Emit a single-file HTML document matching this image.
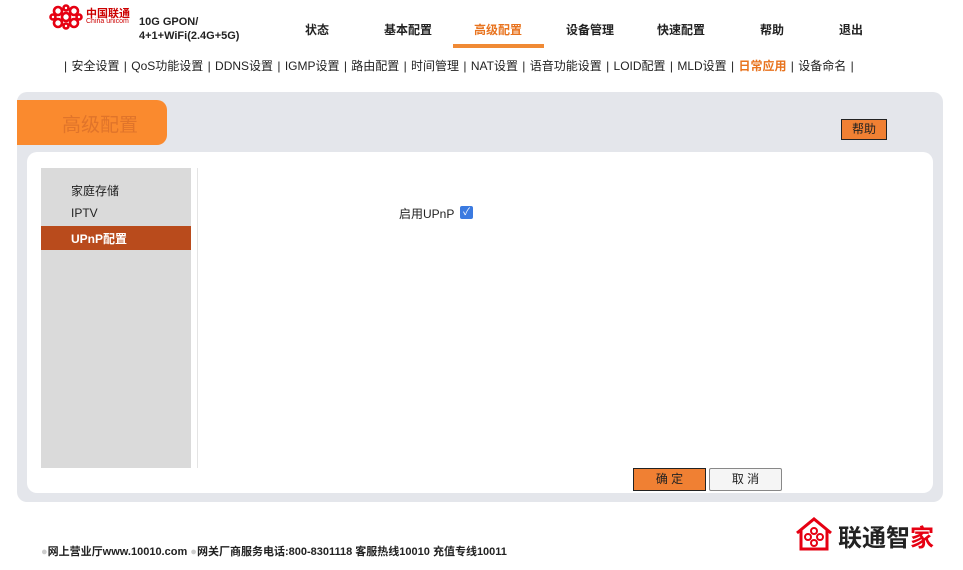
<!DOCTYPE html>
<html><head><meta charset="utf-8"><style>
body{margin:0;width:963px;height:570px;background:#fff;font-family:"Liberation Sans","Noto Sans CJK SC",sans-serif;position:relative;overflow:hidden;color:#222}
.a{position:absolute;white-space:nowrap}
.nav{font-size:12px;font-weight:bold;top:21px}
.sub{top:57px;left:64px;font-size:12px;color:#222;word-spacing:1px}
</style></head><body>
<svg class="a" style="left:49px;top:4px" width="34" height="26" viewBox="0 0 34 26"><g fill="none" stroke="#e60012" stroke-width="2.6"><circle cx="9" cy="7" r="4"/><circle cx="25" cy="7" r="4"/><circle cx="9" cy="19" r="4"/><circle cx="25" cy="19" r="4"/><circle cx="17" cy="13" r="4"/><circle cx="17" cy="4" r="2.5"/><circle cx="17" cy="22" r="2.5"/><circle cx="4" cy="13" r="2.5"/><circle cx="30" cy="13" r="2.5"/></g></svg>
<div class="a" style="left:86px;top:5px;font-size:11px;font-weight:bold;color:#c00">中国联通</div>
<div class="a" style="left:86px;top:18px;font-size:7px;color:#c00">China unicom</div>
<div class="a" style="left:139px;top:15px;font-size:11px;font-weight:bold;line-height:14px">10G GPON/<br>4+1+WiFi(2.4G+5G)</div>
<div class="a nav" style="left:305px">状态</div>
<div class="a nav" style="left:384px">基本配置</div>
<div class="a nav" style="left:474px;color:#e8731e">高级配置</div>
<div class="a" style="left:453px;top:44px;width:91px;height:4px;background:#f08a35"></div>
<div class="a nav" style="left:566px">设备管理</div>
<div class="a nav" style="left:657px">快速配置</div>
<div class="a nav" style="left:760px">帮助</div>
<div class="a nav" style="left:839px">退出</div>
<div class="a sub">| 安全设置 | QoS功能设置 | DDNS设置 | IGMP设置 | 路由配置 | 时间管理 | NAT设置 | 语音功能设置 | LOID配置 | MLD设置 | <span style="color:#e8731e;font-weight:bold">日常应用</span> | 设备命名 |</div>
<div class="a" style="left:17px;top:92px;width:926px;height:410px;background:#e4e6eb;border-radius:10px"></div>
<div class="a" style="left:17px;top:100px;width:150px;height:45px;background:#fa8a2e;border-radius:0 10px 10px 0"></div>
<div class="a" style="left:62px;top:110px;font-size:19px;font-weight:normal;color:#e0742a">高级配置</div>
<div class="a" style="left:841px;top:119px;width:44px;height:19px;background:#f08033;border:1px solid #222;font-size:12px;text-align:center;line-height:19px">帮助</div>
<div class="a" style="left:27px;top:152px;width:906px;height:341px;background:#fff;border-radius:10px"></div>
<div class="a" style="left:41px;top:168px;width:150px;height:300px;background:#dadada"></div>
<div class="a" style="left:197px;top:168px;width:1px;height:300px;background:#e4e4e4"></div>
<div class="a" style="left:71px;top:182px;font-size:12px">家庭存储</div>
<div class="a" style="left:71px;top:206px;font-size:12px">IPTV</div>
<div class="a" style="left:41px;top:226px;width:150px;height:24px;background:#b94b1c"></div>
<div class="a" style="left:71px;top:230px;font-size:12px;color:#fff;font-weight:bold">UPnP配置</div>
<div class="a" style="left:399px;top:205px;font-size:12px">启用UPnP</div>
<div class="a" style="left:460px;top:206px;width:13px;height:13px;background:#3b7ae0;border-radius:2px;color:#fff;font-size:10px;line-height:13px;text-align:center">✓</div>
<div class="a" style="left:633px;top:468px;width:71px;height:21px;background:#f08033;border:1px solid #222;font-size:12px;text-align:center;line-height:21px">确 定</div>
<div class="a" style="left:709px;top:468px;width:71px;height:21px;background:#f5f5f5;border:1px solid #888;border-radius:2px;font-size:12px;text-align:center;line-height:21px">取 消</div>
<div class="a" style="left:41px;top:543px;font-size:11px;font-weight:bold"><span style="color:#ccc">●</span>网上营业厅www.10010.com <span style="color:#ccc">●</span>网关厂商服务电话:800-8301118 客服热线10010 充值专线10011</div>
<svg class="a" style="left:794px;top:517px" width="40" height="34" viewBox="0 0 40 34"><path d="M3 16 L20 2 L37 16 M7 13 V32 H33 V13" fill="none" stroke="#e60012" stroke-width="3"/><g fill="none" stroke="#e60012" stroke-width="2"><circle cx="20" cy="14" r="3"/><circle cx="20" cy="26" r="3"/><circle cx="14" cy="20" r="3"/><circle cx="26" cy="20" r="3"/></g></svg>
<div class="a" style="left:838px;top:518px;font-size:24px;font-weight:bold;color:#222;letter-spacing:0">联通智<span style="color:#e60012">家</span></div>
</body></html>
